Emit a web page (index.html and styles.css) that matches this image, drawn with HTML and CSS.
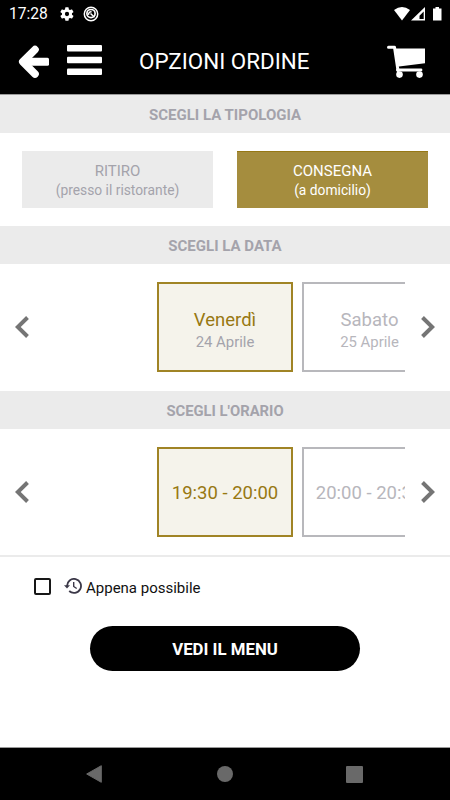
FILE: index.html
```html
<!DOCTYPE html>
<html lang="it">
<head>
<meta charset="utf-8">
<meta name="viewport" content="width=device-width, initial-scale=1">
<title>Opzioni ordine</title>
<link rel="stylesheet" href="styles.css">
</head>
<body>
<div class="app">
  <div class="status">
    <span class="clock">17:28</span>
    <svg class="gear" width="16" height="16" viewBox="0 0 24 24"><path fill="#fff" fill-rule="evenodd" d="M19.4 13l.1-1-.1-1 2.1-1.6c.2-.2.3-.4.1-.7l-2-3.4c-.1-.2-.4-.3-.6-.2l-2.5 1a7 7 0 0 0-1.7-1l-.4-2.6a.5.5 0 0 0-.5-.5h-4a.5.5 0 0 0-.5.5L9 5.100a7 7 0 0 0-1.700 1l-2.500-1c-.2-.1-.5 0-.6.2l-2 3.400c-.1.3 0 .5.1.7L4.500 11l-.1 1 .1 1-2.200 1.600c-.1.2-.2.4-.1.7l2 3.400c.1.2.4.3.6.2l2.500-1a7 7 0 0 0 1.700 1l.4 2.600c0 .3.2.5.5.5h4c.3 0 .5-.2.5-.5l.4-2.600a7 7 0 0 0 1.700-1l2.500 1c.2.1.5 0 .6-.2l2-3.400c.2-.3.1-.5-.1-.7zM12 15.200a3.200 3.200 0 1 1 0-6.400 3.200 3.200 0 0 1 0 6.400z"/></svg>
    <svg class="badge" width="16" height="16" viewBox="0 0 16 16"><circle cx="8" cy="8" r="6.700" fill="none" stroke="#fff" stroke-width="1.500"/><circle cx="8" cy="7.600" r="4.100" fill="none" stroke="#fff" stroke-width="1.700"/><path d="M5.600 8.900a2.500 2.500 0 0 1 3-3M7.500 7.500l4 3.800" fill="none" stroke="#fff" stroke-width="1.500"/></svg>
    <svg class="signals" width="50" height="16" viewBox="0 0 50 16"><path fill="#fff" d="M0 4Q8-2 16 4L8 14.500z"/><path fill="#fff" fill-rule="evenodd" d="M31 1v13.500H17zM29.700 5.500L25.500 9.700V13h4.200z"/><path fill="#fff" d="M41.500 1H45v1.500h2.500v12h-8.500v-12h2.500z"/></svg>
  </div>
  <header class="header">
    <svg class="back" width="32" height="34" viewBox="0 0 32 34"><path d="M17 4.600L4.800 16.800 17 29" fill="none" stroke="#fff" stroke-width="7.600" stroke-linecap="round" stroke-linejoin="round"/><rect x="5" y="12.800" width="26" height="8" rx="1.500" fill="#fff"/></svg>
    <svg class="burger" width="35" height="30" viewBox="0 0 35 30"><g fill="#fff"><rect width="35" height="6.500" rx="1"/><rect y="11.800" width="35" height="6.500" rx="1"/><rect y="23.500" width="35" height="6.500" rx="1"/></g></svg>
    <h1 class="title">OPZIONI ORDINE</h1>
    <svg class="cart" width="40" height="34" viewBox="0 0 40 34"><path d="M2.500 2.200H8.500L12 25.500" fill="none" stroke="#fff" stroke-width="3" stroke-linecap="round" stroke-linejoin="round"/><path d="M8.500 3.500H39v14.800L13 21.500l-2-1z" fill="#fff"/><path d="M11.500 25H35" fill="none" stroke="#fff" stroke-width="2.800" stroke-linecap="round"/><circle cx="13.500" cy="29.600" r="3.300" fill="#fff"/><circle cx="33.500" cy="29.600" r="3.300" fill="#fff"/></svg>
  </header>
  <h2 class="section">SCEGLI LA TIPOLOGIA</h2>
  <div class="types">
    <div class="type"><span class="type-name">RITIRO</span><span class="type-note">(presso il ristorante)</span></div>
    <div class="type type-on"><span class="type-name">CONSEGNA</span><span class="type-note">(a domicilio)</span></div>
  </div>
  <h2 class="section data-title">SCEGLI LA DATA</h2>
  <div class="slider">
    <svg class="chevron" width="14" height="22" viewBox="0 0 14 22"><path d="M12.500 1.500L2.800 11l9.700 9.500" fill="none" stroke="#757575" stroke-width="4"/></svg>
    <div class="track">
      <div class="card card-on"><span class="day">Venerdì</span><span class="date">24 Aprile</span></div>
      <div class="card"><span class="day">Sabato</span><span class="date">25 Aprile</span></div>
    </div>
    <svg class="chevron" width="14" height="22" viewBox="0 0 14 22"><path d="M1.500 1.500L11.200 11l-9.700 9.500" fill="none" stroke="#757575" stroke-width="4"/></svg>
  </div>
  <h2 class="section time-title">SCEGLI L'ORARIO</h2>
  <div class="slider">
    <svg class="chevron" width="14" height="22" viewBox="0 0 14 22"><path d="M12.500 1.500L2.800 11l9.700 9.500" fill="none" stroke="#757575" stroke-width="4"/></svg>
    <div class="track">
      <div class="card card-on"><span class="time">19:30 - 20:00</span></div>
      <div class="card"><span class="time">20:00 - 20:30</span></div>
    </div>
    <svg class="chevron" width="14" height="22" viewBox="0 0 14 22"><path d="M1.500 1.500L11.200 11l-9.700 9.500" fill="none" stroke="#757575" stroke-width="4"/></svg>
  </div>
  <div class="divider"></div>
  <div class="asap">
    <span class="box"></span>
    <svg class="history" width="18" height="16" viewBox="0 0 18 16"><path d="M3 8a7 7 0 1 1 2.200 5" fill="none" stroke="#3b3848" stroke-width="1.800"/><path d="M0 7.300h6L3 10.600z" fill="#3b3848"/><path d="M9.700 4v4.500l3 2" fill="none" stroke="#3b3848" stroke-width="1.400"/></svg>
    <span class="asap-text">Appena possibile</span>
  </div>
  <div class="cta">VEDI IL MENU</div>
  <nav class="nav">
    <svg width="16" height="18" viewBox="0 0 16 18"><path d="M15.300.7v16.600L.7 9z" fill="#696969" stroke="#696969" stroke-linejoin="round"/></svg>
    <span class="home"></span>
    <span class="recent"></span>
  </nav>
</div>
</body>
</html>
```

FILE: styles.css
```css
* { box-sizing: border-box; }
body { margin: 0; background: #fff; font-family: Roboto, sans-serif; }
.app { width: 450px; height: 800px; display: flex; flex-direction: column; overflow: hidden; color: #a4a3ab; }
.status { flex: none; height: 27px; background: #000; color: #fff; display: flex; align-items: center; padding: 0 6px 0 9px; }
.clock { width: 50px; font-size: 15.6px; line-height: 27px; padding-top: 1px; }
.badge { margin-left: 8px; }
.signals { margin-left: auto; }
.header { flex: none; height: 67px; background: #000; display: flex; align-items: center; padding: 3px 24px 0 18px; box-shadow: 0 1px 0 #9b9b9b; z-index: 1; }
.back { margin-right: 17px; }
.burger { margin-top: -4px; }
.title { margin: -2px 0 0 37px; color: #fff; font-size: 22.4px; line-height: 30px; font-weight: 400; white-space: nowrap; }
.cart { margin-left: auto; }
.section { flex: none; margin: 0; height: 39px; padding-top: 1px; background: #ebebeb; font-size: 15px; line-height: 40px; font-weight: 700; text-align: center; }
.types { flex: none; height: 93px; padding: 18px 22px; display: flex; gap: 24px; }
.type { flex: 1; height: 57px; background: #ebebeb; display: flex; flex-direction: column; align-items: center; padding-top: 10px; }
.type-on { background: #a58d3e; color: #fff; border-top: 1px solid #967815; padding-top: 9px; }
.type-name { font-size: 15px; line-height: 20px; }
.type-note { font-size: 13.8px; line-height: 19px; }
.data-title, .time-title { height: 38px; padding-top: 0; line-height: 40px; }
.time-title { font-size: 14.8px; }
.slider { flex: none; height: 127px; padding: 0 15px 2px; display: flex; align-items: center; justify-content: space-between; }
.track { width: 360px; height: 90px; padding-left: 112px; display: flex; gap: 9px; overflow: hidden; }
.card { flex: none; width: 136px; height: 90px; border: 2px solid #b8b8bc; color: #b7b6bc; display: flex; flex-direction: column; align-items: center; justify-content: center; white-space: nowrap; }
.card-on { background: #f5f3eb; border-color: #a08425; color: #987812; }
.day { font-size: 18.5px; line-height: 24px; margin: 7px 1px 0 0; }
.date { font-size: 14.9px; line-height: 21px; margin-right: 1px; }
.card-on .day, .card-on .date { margin-right: 0; }
.card-on .date { color: #a4a3ab; }
.time { font-size: 18.5px; line-height: 24px; margin: 2px 2px 0 0; }
.card-on .time { margin-right: 0; }
.divider { flex: none; height: 2px; margin-top: -1px; background: #ebebeb; }
.asap { flex: none; height: 69px; padding: 0 0 7px 34px; display: flex; align-items: center; color: #111; }
.box { width: 17px; height: 17px; margin-top: -3px; border: 2px solid #171717; border-radius: 2px; }
.history { margin: -4px 4px 0 13px; }
.asap-text { font-size: 15px; line-height: 20px; }
.cta { flex: none; width: 270px; height: 45px; margin: 0 auto; border-radius: 23px; background: #000; color: #fff; font-size: 16.8px; line-height: 47px; font-weight: 700; text-align: center; }
.nav { flex: none; height: 53px; margin-top: auto; border-top: 1px solid #999; background: #000; display: flex; align-items: center; justify-content: space-between; padding: 0 87px 0 86px; }
.home { width: 16px; height: 16px; margin-left: 2px; border-radius: 50%; background: #696969; }
.recent { width: 17px; height: 17px; border-radius: 1px; background: #696969; }
```
